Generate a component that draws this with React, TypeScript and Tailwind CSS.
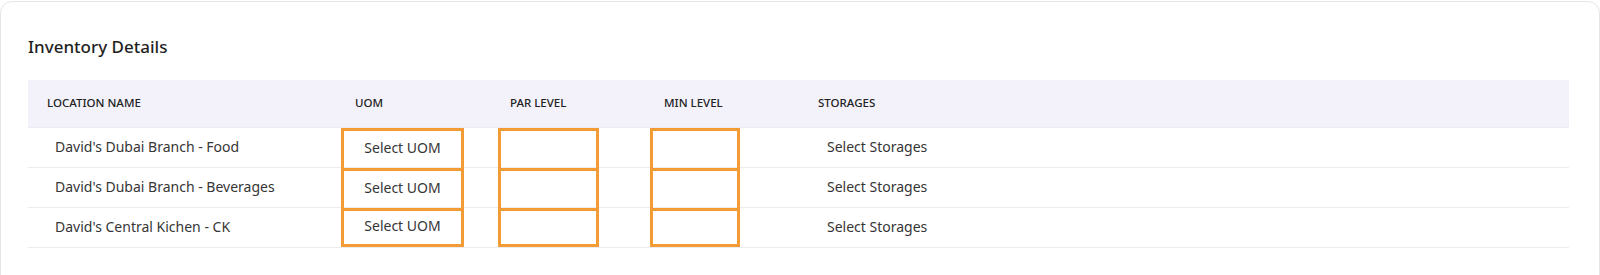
const rows = [
  "David's Dubai Branch - Food",
  "David's Dubai Branch - Beverages",
  "David's Central Kichen - CK",
];

export default function App() {
  return (
    <div className="w-[1600px] h-[275px] bg-white pt-px overflow-hidden font-['Noto_Sans',sans-serif]">
      <div className="h-[300px] border border-[#e4e4ea] rounded-xl pt-[33px] pl-[27px] pr-[30px]">
        <h2 className="text-[17px] leading-6 font-medium text-[#1f1f1f]">Inventory Details</h2>

        <div className="mt-[21px]">
          {/* header */}
          <div className="flex h-12 items-center pb-[2px] bg-[#f3f2fa] text-[11.5px] font-medium text-[#222] uppercase border-b border-[#ebebf0]">
            <div className="w-[313px] pl-[19px]">Location Name</div>
            <div className="w-[157px] pl-[14px]">UOM</div>
            <div className="w-[152px] pl-[12px]">Par Level</div>
            <div className="w-[154px] pl-[14px]">Min Level</div>
            <div className="flex-1 pl-[14px]">Storages</div>
          </div>

          {rows.map((name, i) => {
            const last = i === rows.length - 1;
            const box = `relative z-10 -mb-px border-x-[3px] border-t-[3px] border-[#f39c35] ${last ? 'border-b-[3px] mb-0' : ''}`;
            return (
              <div key={name} className="flex h-[40px] border-b border-[#ececf0] text-[14px] text-[#363636]">
                <div className="w-[313px] pl-[27px] pb-[3px] flex items-center">{name}</div>
                <div className="w-[157px] flex">
                  <div className={`w-[123px] flex items-center justify-center pb-[4px] ${box}`}>Select UOM</div>
                </div>
                <div className="w-[152px] flex">
                  <div className={`w-[101px] ${box}`}></div>
                </div>
                <div className="w-[154px] flex">
                  <div className={`w-[90px] ${box}`}></div>
                </div>
                <div className="flex-1 pl-[23px] pb-[3px] flex items-center">Select Storages</div>
              </div>
            );
          })}
        </div>
      </div>
    </div>
  );
}
